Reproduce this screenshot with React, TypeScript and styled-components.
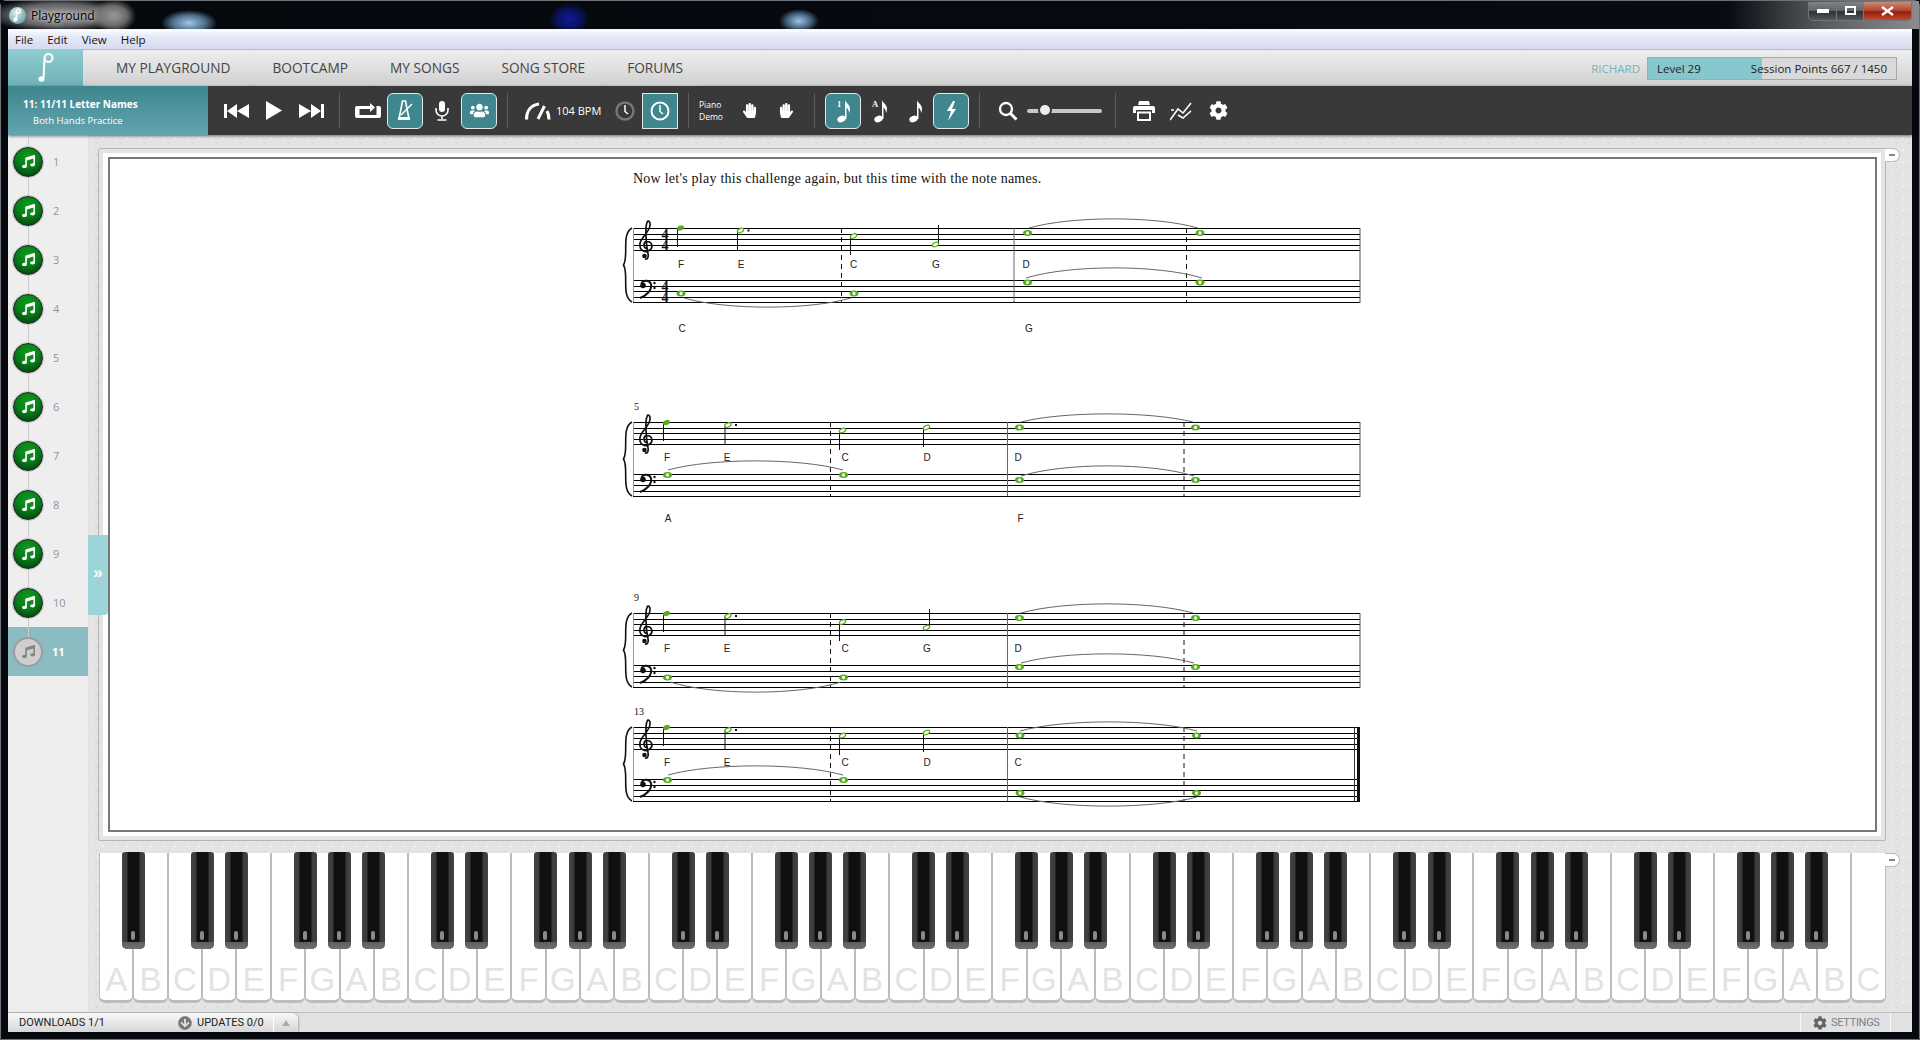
import React from "react";
import styled, { createGlobalStyle } from "styled-components";
import { FaMusic, FaHandPaper, FaUsers, FaCog, FaArrowCircleDown } from "react-icons/fa";

const Global = createGlobalStyle`
  html, body { margin: 0; padding: 0; background: #05080d; }
  * { box-sizing: border-box; }
  #root { width: 1920px; height: 1040px; overflow: hidden; }
`;

const Desktop = styled.div`
  width: 1920px; height: 1040px; display: flex; flex-direction: column;
  background: #05080d; font-family: "Open Sans", "Liberation Sans", sans-serif;
  border: 1px solid #6d7176; border-radius: 6px 6px 0 0;
  padding: 0 7px 7px 7px;
  box-shadow: inset 0 0 0 1px #0a0d12;
`;
const TitleBar = styled.div`
  height: 28px; margin: 0 -7px; padding: 0 7px 0 8px; display: flex; align-items: center; gap: 5px; flex: none;
  background:
    radial-gradient(ellipse 22px 17px at 113px 15px, #969696 0, #7c7c7ccc 60%, transparent 100%),
    radial-gradient(ellipse 72px 17px at 58px 14px, #9a9a9a 0, #8e8e8eaa 65%, transparent 100%),
    radial-gradient(ellipse 28px 13px at 188px 22px, #9cc5ea 0, #7fb0dd99 60%, transparent 100%),
    radial-gradient(ellipse 20px 16px at 568px 18px, #0f1a9c 0, #0f1a9c88 60%, transparent 100%),
    radial-gradient(ellipse 20px 12px at 798px 20px, #9cc5ea 0, #7fb0dd88 60%, transparent 100%),
    linear-gradient(90deg, #05080d 0, #070b12 90%, #595b5d 95%, #8a8c8e 100%);
`;
const AppIcon = styled.div`
  width: 17px; height: 17px; border-radius: 50%; flex: none; display: flex; align-items: center; justify-content: center;
  background: radial-gradient(circle at 40% 35%, #d8eef0, #6aa9b0 75%, #3e6d73);
`;
const TitleText = styled.span`
  font-size: 12px; color: #000; text-shadow: 0 0 4px #ddd, 0 0 7px #ccc;
`;
const WinControls = styled.div`
  margin-left: auto; margin-top: -8px; height: 19px; display: flex; border: 1px solid #70757a; border-top: none; border-radius: 0 0 5px 5px; overflow: hidden; flex: none;
`;
const WinBtn = styled.div<{ $w: number; $red?: boolean }>`
  width: ${p => p.$w}px; display: flex; align-items: center; justify-content: center;
  border-right: 1px solid #777;
  background: ${p => p.$red
    ? "linear-gradient(#c98a7c 0, #b84a33 45%, #8f1f0e 55%, #c44a2f 100%)"
    : "linear-gradient(#7e8387 0, #5f6468 48%, #2e3236 52%, #54585c 100%)"};
  &:last-child { border-right: none; }
`;

const AppShell = styled.div`
  flex: 1; min-height: 0; display: flex; flex-direction: column; background: #eee;
  border-top: 1px solid #f5f5f5;
`;
const MenuBar = styled.div`
  height: 20px; flex: none; display: flex; align-items: center; gap: 14px; padding-left: 7px; font-size: 11.5px; color: #111;
  background: linear-gradient(#fbfcff 0, #e6e9f6 35%, #d5daee 100%); border-bottom: 1px solid #b5b9d2;
`;
const NavBar = styled.div`
  height: 36px; flex: none; display: flex; align-items: stretch;
  background: linear-gradient(#ededed 0, #e3e3e3 40%, #cfcfcf 100%);
`;
const Logo = styled.div`
  width: 75px; margin-right: 15px; flex: none; display: flex; align-items: center; justify-content: center;
  background: linear-gradient(#8fcdd1, #6fb0b7);
`;
const NavTab = styled.div`
  display: flex; align-items: center; padding: 4px 18px 0; margin-right: 6px; font-size: 13.7px; color: #444;
  border-bottom: 5px solid #d3d3d3; white-space: nowrap;
`;
const UserArea = styled.div`
  margin-left: auto; padding-right: 15px; display: flex; align-items: center; gap: 7px;
`;
const UserName = styled.span`
  font-size: 11.5px; color: #74b3bb;
`;
const LevelBar = styled.div`
  width: 250px; height: 23px; border: 1px solid #a8a8a8; display: flex; align-items: center; justify-content: space-between;
  padding: 0 9px; font-size: 11.5px; color: #222;
  background: linear-gradient(90deg, #88c6cd 0, #88c6cd 46%, #d9d9d9 46%, #d9d9d9 100%);
`;

const Toolbar = styled.div`
  height: 49px; flex: none; display: flex; align-items: center; background: #393939; position: relative; z-index: 2;
  box-shadow: 0 1px 3px rgba(0,0,0,.55);
`;
const InfoPanel = styled.div`
  width: 200px; height: 100%; flex: none; padding: 11px 0 0 15px; color: #fff;
  background: linear-gradient(#3f858e, #62a5ae);
`;
const InfoTitle = styled.div`
  font-size: 10px; font-weight: 700; line-height: 15px; white-space: nowrap;
`;
const InfoSub = styled.div`
  font-size: 9.5px; line-height: 14px; margin: 2px 0 0 10px; white-space: nowrap;
`;
const Group = styled.div<{ $first?: boolean }>`
  display: flex; align-items: center; gap: 1px; margin-left: ${p => p.$first ? 11 : 0}px;
`;
const Sep = styled.div`
  width: 1px; height: 35px; background: #5c5c5c; margin: 0 10px; flex: none;
`;
const Slot = styled.div<{ $w?: number; $on?: boolean; $square?: boolean; $shift?: number }>`
  width: ${p => p.$w ?? 36}px; height: 36px; flex: none; display: flex; align-items: center; justify-content: center; color: #fff;
  padding-left: ${p => p.$shift ?? 0}px;
  ${p => p.$on ? `background: #3f868f; border: 1px solid #dfeaeb; border-radius: ${p.$square ? 0 : 6}px;` : ""}
`;
const BpmText = styled.div`
  width: 47px; font-size: 11px; color: #fff; white-space: nowrap; margin-left: -1px; margin-right: 1px;
`;
const DemoText = styled.div`
  width: 31px; font-size: 8.5px; line-height: 11.5px; color: #fff;
`;
const SliderTrack = styled.div`
  width: 75px; height: 4px; border-radius: 2px; background: #c8c8c8; position: relative; flex: none; margin-right: 3px;
  &::after { content: ""; position: absolute; left: 13px; top: -3.5px; width: 10px; height: 10px; border-radius: 50%; background: #eee; box-shadow: 0 0 0 2px #393939; }
`;

const Body = styled.div`
  flex: 1; min-height: 0; display: flex;
`;
const Sidebar = styled.div`
  width: 80px; flex: none; padding-top: 2px; background: #eee;
`;
const LessonRow = styled.div<{ $on?: boolean; $last?: boolean }>`
  height: 49px; display: flex; align-items: center; gap: 10px; padding-left: 5px; position: relative;
  background: ${p => p.$on ? "#8bbcc2" : "transparent"};
  &::before { content: ""; position: absolute; left: 19.5px; top: 0; width: 1px; height: ${p => p.$last ? "50%" : "100%"}; background: #cbcbcb; }
`;
const NoteBadge = styled.div<{ $on?: boolean }>`
  width: 30px; height: 30px; border-radius: 50%; flex: none; position: relative; display: flex; align-items: center; justify-content: center;
  color: ${p => p.$on ? "#858585" : "#fff"}; font-size: 13px;
  ${p => p.$on
    ? "background: #cfcfcf; border: 2px solid #9c9c9c;"
    : "background: radial-gradient(circle at 50% 30%, #0f9a1d 0, #07801a 45%, #023f0c 90%); border: 1px solid #222; box-shadow: 0 0 0 1px #c9c9c9;"}
`;
const LessonNum = styled.span<{ $on?: boolean }>`
  font-size: 11px; color: ${p => p.$on ? "#fff" : "#8c93a3"}; font-weight: ${p => p.$on ? 700 : 400}; margin-left: ${p => p.$on ? -1 : 0}px;
`;
const Workspace = styled.div`
  flex: 1; min-width: 0; display: flex; flex-direction: column; position: relative; padding: 13px 26px 9px 10px;
  background-color: #e4e4e4;
  background-image:
    radial-gradient(circle at 3px 3px, #efefef 1px, transparent 1.6px),
    radial-gradient(circle at 9px 8px, #dadada 1px, transparent 1.6px);
  background-size: 12px 12px;
`;
const ExpandTab = styled.div`
  position: absolute; left: 0; top: 400px; width: 20px; height: 80px; background: #9dd4d8; border-radius: 0 0 4px 0;
  display: flex; align-items: center; justify-content: center; color: #fff; font: 700 17px "Liberation Sans", sans-serif; padding-bottom: 4px;
`;
const CollapseBtn = styled.div<{ $top: number }>`
  position: absolute; z-index: 3; left: 1797px; top: ${p => p.$top}px; width: 15px; height: 14px; background: #fff; border: 1px solid #bbb; border-left: none; border-radius: 0 7px 7px 0;
  display: flex; align-items: center; justify-content: center;
  &::after { content: ""; width: 6px; height: 2px; background: #888; }
`;
const SheetFrame = styled.div`
  width: 1788px; height: 693px; flex: none; padding: 8px 8px 8px 9px; background: #fff; border: 1px solid #b5b5b5; border-radius: 2px;
  box-shadow: inset 0 0 0 4px #e4e4e4; display: flex;
`;
const Sheet = styled.div`
  flex: 1; border: 2px solid #777; background: #fff; padding: 12px 0 0 523px; overflow: hidden;
`;
const Intro = styled.p`
  margin: 0 0 3px; font: 14px/16px "Liberation Serif", serif; letter-spacing: .24px; color: #111; white-space: nowrap;
`;
const ScoreSvg = styled.svg`
  display: block; margin-left: -13px;
`;
const Keyboard = styled.div`
  width: 1787px; height: 150px; margin: 12px 0 0 1px; display: flex; flex: none;
`;
const WhiteKey = styled.div`
  flex: 1; position: relative; background: #fff; border: solid #bcbcbc; border-width: 0 1px 3px 1px; border-radius: 0 0 6px 6px;
  display: flex; align-items: flex-end; justify-content: center;
`;
const KeyLabel = styled.span`
  font: 33px/33px "Liberation Sans", sans-serif; color: #e3e3e3; margin-bottom: 4px;
`;
const BlackKey = styled.div`
  position: absolute; z-index: 2; top: -1px; right: -12.5px; width: 23px; height: 97px; border-radius: 3px 3px 5px 5px; overflow: hidden;
  background: linear-gradient(90deg, #444 0, #3a3a3a 22%, #0f0f0f 26%, #111 74%, #3a3a3a 78%, #444 100%);
  &::before { content: ""; position: absolute; left: 9px; bottom: 9px; width: 4px; height: 9px; border-radius: 2px; background: #8a8a8a; }
  &::after { content: ""; position: absolute; left: 0; right: 0; bottom: 0; height: 7px; background: linear-gradient(#5e5e5e, #707070); }
`;
const StatusBar = styled.div`
  height: 20px; flex: none; display: flex; align-items: stretch; background: #e2e2e2; border-top: 1px solid #bdbdbd;
  font: 11px "Roboto", sans-serif; color: #222;
`;
const StatusTab = styled.div`
  width: 290px; display: flex; align-items: center; padding-left: 11px; border-radius: 0 6px 0 0; flex: none;
  background: linear-gradient(#f8f8f8, #d6d6d6); box-shadow: 1px 0 2px rgba(0,0,0,.25);
`;
const Downloads = styled.span`
  width: 159px; white-space: nowrap;
`;
const UpdateIcon = styled.span`
  color: #777; font-size: 14px; display: flex; margin-right: 5px;
`;
const UpdateTab = styled.span`
  width: 76px; white-space: nowrap;
`;
const TabDivider = styled.span`
  width: 1px; height: 18px; background: #fff; margin-right: 8px;
`;
const UpArrow = styled.span`
  width: 0; height: 0; border: 4px solid transparent; border-bottom: 6px solid #aaa; border-top: none;
`;
const SettingsCell = styled.div`
  margin-left: auto; margin-right: 21px; width: 91px; border-left: 1px solid #f7f7f7; border-right: 1px solid #f7f7f7; display: flex; align-items: center; gap: 4px; padding-left: 12px; color: #77808f; letter-spacing: -.3px;
`;

const W = "#fff";
const I = (p: React.SVGProps<SVGSVGElement>) => <svg fill={W} {...p} />;

const Prev = () => <I width="26" height="14" viewBox="0 0 26 14"><rect x="0" y="0" width="3" height="14"/><path d="M3 7 13 0v14zM13 7 25 0v14z"/></I>;
const Next = () => <I width="26" height="14" viewBox="0 0 26 14"><rect x="23" y="0" width="3" height="14"/><path d="M23 7 13 0v14zM13 7 1 0v14z"/></I>;
const Play = () => <I width="16" height="19" viewBox="0 0 16 19"><path d="M0 0 16 9.5 0 19z"/></I>;
const Loop = () => <I width="26" height="15" viewBox="0 0 26 15"><path d="M2 3h13v-3l5 4.5-5 4.5V6H4.500v6h17V3H24a2 2 0 0 1 2 2v8a2 2 0 0 1-2 2H2a2 2 0 0 1-2-2V5a2 2 0 0 1 2-2z"/></I>;
const Metronome = () => <svg width="16" height="21" viewBox="0 0 16 21" fill="none" stroke={W}><path d="M5.500 1h3l3.500 18H2z" strokeWidth="1.6"/><path d="M4 15 15 4" strokeWidth="1.5"/><rect x="1" y="17" width="12" height="3" fill={W} stroke="none"/></svg>;
const Mic = () => <svg width="14" height="20" viewBox="0 0 14 20" fill="none" stroke={W} strokeWidth="1.600"><rect x="4" y="0" width="6" height="11" rx="3" fill={W} stroke="none"/><path d="M1 7v2a6 6 0 0 0 12 0V7M7 15v3M2.500 19h9"/></svg>;
const Gauge = () => <svg width="27" height="18" viewBox="0 0 27 18" fill="none" stroke={W}><path d="M2.500 17.500C2.500 9 7 3 15 2" strokeWidth="3.200"/><path d="M25 17.500c0-3-.5-6-2-8.500" strokeWidth="3.200"/><path d="M14 17 20.500 4" strokeWidth="3"/></svg>;
const Clock = ({ c = W, w = 2 }: { c?: string; w?: number }) => <svg width="20" height="20" viewBox="0 0 20 20" fill="none"><circle cx="10" cy="10" r="8.500" stroke={c} strokeWidth={w}/><path d="M10 4v6.500l3 2.500" stroke={W} strokeWidth="1.500"/></svg>;
const QNote = ({ mark, mx = 7 }: { mark?: string; mx?: number }) => (
  <svg width="26" height="24" viewBox="0 0 26 24">
    {mark && <text x={mx} y="8" fontSize="8.5" fontWeight={700} fontFamily="Liberation Serif, serif" fill={W}>{mark}</text>}
    <ellipse cx="11.500" cy="20" rx="4.300" ry="3.200" fill={W} transform="rotate(-20 11.500 20)"/>
    <path d="M15 20V1c.5 3 5 4 5 9 0 2-.5 3-1 4 0-3-1.500-4.500-2.500-5.500V20z" fill={W}/>
  </svg>
);
const Bolt = () => <I width="11" height="20" viewBox="0 0 11 20"><path d="M7 0 1 10h4l-3 10 8-12H6l3-8z"/></I>;
const Search = () => <svg width="20" height="20" viewBox="0 0 20 20" fill="none" stroke={W}><circle cx="8" cy="8" r="6" strokeWidth="2.300"/><path d="m12.500 12.500 6 6" strokeWidth="3"/></svg>;
const Printer = () => <I width="22" height="20" viewBox="0 0 22 20"><path d="M6 0h10l1 4H5zM2 5h18a2 2 0 0 1 2 2v5h-3V9H3v3H0V7a2 2 0 0 1 2-2zM4 10.500h14V20H4zm2 2V18h10v-5.500z"/></I>;
const Chart = () => <svg width="22" height="20" viewBox="0 0 22 20" fill="none" stroke={W} strokeWidth="1.600"><path d="M0 19 8 8l5 4 8-10"/><path d="M1 9h3M8 14l5 3 8-7"/></svg>;

const Score = () => {
  const green = "#55ac1d";
  const Whole = ({ x, y }: { x: number; y: number }) => (<g><ellipse cx={x} cy={y} rx="4.500" ry="3" fill={green}/><ellipse cx={x} cy={y} rx="1.500" ry="1.800" fill="#fff"/></g>);
  const Half = ({ x, y, stem, up, dot }: { x: number; y: number; stem?: number; up?: boolean; dot?: boolean }) => (
    <g>
      <line x1={up ? x + 3 : x - 3} x2={up ? x + 3 : x - 3} y1={y} y2={stem} stroke="#111" strokeWidth="1"/>
      <ellipse cx={x} cy={y} rx="3.300" ry="2" fill="#fff" stroke={green} strokeWidth="1.200" transform={`rotate(-25 ${x} ${y})`}/>
      {dot && <rect x={x + 7} y={y - 1} width="2" height="2" fill="#111"/>}
    </g>
  );
  const Filled = ({ x, y, stem }: { x: number; y: number; stem: number }) => (
    <g>
      <line x1={x - 3} x2={x - 3} y1={y} y2={stem} stroke="#111" strokeWidth="1"/>
      <ellipse cx={x} cy={y} rx="3.600" ry="2.500" fill={green} transform={`rotate(-20 ${x} ${y})`}/>
    </g>
  );
  const Tie = ({ a, b, y, peak }: { a: number; b: number; y: number; peak: number }) => (
    <path d={`M${a} ${y}C${a + (b - a) * .25} ${2 * peak - y - (peak - y) * .65} ${a + (b - a) * .75} ${2 * peak - y - (peak - y) * .65} ${b} ${y}`} fill="none" stroke="#666" strokeWidth="1"/>
  );
  const Label = ({ x, y, t }: { x: number; y: number; t: string }) => (
    <text x={x} y={y} fontSize="10" textAnchor="middle" fontFamily="Liberation Sans, sans-serif" fill="#222">{t}</text>
  );
  const Staff = ({ t, b, bars, time, final }: { t: number; b: number; bars: [number, number, number]; time?: boolean; final?: boolean }) => {
    const tl = [0, 6, 11, 17, 22].map(d => t + d);
    const bl = [0, 6, 11, 17, 22].map(d => b + d);
    const tx = t + 16.5;
    return (
      <g>
        {[...tl, ...bl].map(y => <line key={y} x1="633" x2="1360" y1={y + .5} y2={y + .5} stroke="#000" strokeWidth="1"/>)}
        <line x1="633.500" x2="633.500" y1={t} y2={b + 22} stroke="#999" strokeWidth="1"/>
        <line x1={bars[0]} x2={bars[0]} y1={t} y2={b + 22} stroke="#111" strokeWidth="1" strokeDasharray="5 4"/>
        <line x1={bars[1]} x2={bars[1]} y1={t} y2={b + 22} stroke="#666" strokeWidth="1"/>
        <line x1={bars[2]} x2={bars[2]} y1={t} y2={b + 22} stroke="#111" strokeWidth="1" strokeDasharray="5 4"/>
        {final
          ? <g><line x1="1354.500" x2="1354.500" y1={t} y2={b + 22} stroke="#333"/><rect x="1357" y={t} width="3" height={b + 22 - t} fill="#111"/></g>
          : <line x1="1360" x2="1360" y1={t} y2={b + 23} stroke="#555"/>}
        <path d={`M632 ${t}C621 ${t + 6} 629 ${(t + b) / 2 + 2} 623.500 ${(t + b + 22) / 2}C629 ${(t + b) / 2 + 20} 621 ${b + 16} 632 ${b + 22}`} fill="none" stroke="#111" strokeWidth="1.600"/>
        <g transform={`translate(646 ${tx})`} fill="none" stroke="#111">
          <path d="M1 4C-3 4-3-3 1-3 6-3 8 3 3 6-2 9-7 5-6-1-5-7 3-12 4-19 4.500-23 2-25 1-22-1-17 0 0 2 9 3 13 1 15-1 14.500" strokeWidth="1.700"/>
          <circle cx="-1.500" cy="11.500" r="2.300" fill="#111" stroke="none"/>
        </g>
        <g transform={`translate(640 ${b})`} fill="none" stroke="#111">
          <circle cx="3" cy="5.500" r="2.800" fill="#111" stroke="none"/>
          <path d="M1.500 4C2 .5 9-1 11 4 12.500 10 6 16 0 18" strokeWidth="2"/>
          <circle cx="14.500" cy="3" r="1.200" fill="#111" stroke="none"/>
          <circle cx="14.500" cy="8" r="1.200" fill="#111" stroke="none"/>
        </g>
        {time && ["t", "b"].map(k => {
          const y0 = k === "t" ? t : b;
          return <g key={k} fontFamily="Liberation Serif, serif" fontWeight={700} fontSize="14" fill="#111" textAnchor="middle"><text x="665" y={y0 + 11}>4</text><text x="665" y={y0 + 22}>4</text></g>;
        })}
      </g>
    );
  };
  const Num = ({ x, y, t }: { x: number; y: number; t: string }) => <text x={x} y={y} fontSize="10" fontFamily="Liberation Serif, serif" fill="#111">{t}</text>;
  return (
    <ScoreSvg width="750" height="620" viewBox="620 190 750 620">
      {/* System 1 */}
      <Staff t={228} b={280} bars={[841.500, 1014, 1186.500]} time/>
      <Filled x={680.500} y={228} stem={247}/>
      <Half x={740.500} y={230.500} stem={250} dot/>
      <Half x={853.500} y={236} stem={255}/>
      <Half x={935.500} y={244.500} stem={225} up/>
      <Whole x={1027.500} y={233}/><Whole x={1200} y={233}/>
      <Tie a={1029} b={1198} y={228} peak={219}/>
      <Whole x={681} y={293.500}/><Whole x={854} y={293.500}/>
      <Tie a={684} b={851} y={298} peak={307}/>
      <Whole x={1027.500} y={282.500}/><Whole x={1200} y={282.500}/>
      <Tie a={1026} b={1202} y={278} peak={268}/>
      {[["F", 681], ["E", 741], ["C", 853.500], ["G", 936], ["D", 1026]].map(([t, x]) => <Label key={t as string} x={x as number} y={268} t={t as string}/>)}
      <Label x={682} y={332} t="C"/><Label x={1029} y={332} t="G"/>

      {/* System 2 */}
      <Num x={634} y={410} t="5"/>
      <Staff t={422} b={474} bars={[830.500, 1007.500, 1184]}/>
      <Filled x={666.500} y={422.500} stem={441}/>
      <Half x={728} y={425} stem={444} dot/>
      <Half x={842.500} y={430.500} stem={450}/>
      <Half x={926.500} y={427.500} stem={447}/>
      <Whole x={1019.500} y={427.500}/><Whole x={1195.500} y={427.500}/>
      <Tie a={1021} b={1193} y={422} peak={414}/>
      <Whole x={667.500} y={475}/><Whole x={843.500} y={475}/>
      <Tie a={668} b={843} y={470} peak={461}/>
      <Whole x={1019.500} y={480}/><Whole x={1195.500} y={480}/>
      <Tie a={1021} b={1194} y={476} peak={466}/>
      {[["F", 667], ["E", 727], ["C", 845], ["D", 927], ["D2", 1018]].map(([t, x]) => <Label key={t as string} x={x as number} y={461} t={(t as string)[0]}/>)}
      <Label x={668} y={522} t="A"/><Label x={1020.500} y={522} t="F"/>

      {/* System 3 */}
      <Num x={634} y={601} t="9"/>
      <Staff t={613} b={665} bars={[830.500, 1007.500, 1184]}/>
      <Filled x={666.500} y={613.500} stem={632}/>
      <Half x={728} y={616} stem={635} dot/>
      <Half x={842.500} y={622} stem={641}/>
      <Half x={926.500} y={627.500} stem={609} up/>
      <Whole x={1019.500} y={618}/><Whole x={1195.500} y={618}/>
      <Tie a={1021} b={1193} y={613} peak={604}/>
      <Whole x={667.500} y={677.500}/><Whole x={843.500} y={677.500}/>
      <Tie a={670} b={841} y={682} peak={692}/>
      <Whole x={1019.500} y={667}/><Whole x={1195.500} y={667}/>
      <Tie a={1021} b={1194} y={663} peak={654}/>
      {[["F", 667], ["E", 727], ["C", 845], ["G", 927], ["D", 1018]].map(([t, x]) => <Label key={t as string} x={x as number} y={652} t={t as string}/>)}

      {/* System 4 */}
      <Num x={634} y={715} t="13"/>
      <Staff t={727} b={779} bars={[830.500, 1007.500, 1184]} final/>
      <Filled x={666.500} y={727.500} stem={746}/>
      <Half x={728} y={730} stem={749} dot/>
      <Half x={842.500} y={735.500} stem={755}/>
      <Half x={926.500} y={732.500} stem={752}/>
      <Whole x={1020} y={735.500}/><Whole x={1196.500} y={735.500}/>
      <Tie a={1020} b={1197} y={731} peak={722}/>
      <Whole x={667.500} y={780}/><Whole x={843.500} y={780}/>
      <Tie a={668} b={843} y={775} peak={766}/>
      <Whole x={1020} y={793}/><Whole x={1196.500} y={793}/>
      <Tie a={1020} b={1197} y={797} peak={806}/>
      {[["F", 667], ["E", 727], ["C", 845], ["D", 927], ["C2", 1018]].map(([t, x]) => <Label key={t as string} x={x as number} y={766} t={(t as string)[0]}/>)}
    </ScoreSvg>
  );
};

const lessons = Array.from({ length: 11 }, (_, i) => i + 1);
const keys = ("AB" + "CDEFGAB".repeat(7) + "C").split("");
const noSharp = (k: string, i: number) => k === "B" || k === "E" || i === keys.length - 1;

export default function App() {
  return (
    <>
      <Global />
      <Desktop>
        <TitleBar>
          <AppIcon>
            <svg width="9" height="14" viewBox="0 0 9 14" fill="none" stroke="#fff" strokeWidth="1.300"><circle cx="5.500" cy="3" r="2"/><path d="M3.500 3.500V11"/><circle cx="2.500" cy="11.500" r="1.500" fill="#fff"/></svg>
          </AppIcon>
          <TitleText>Playground</TitleText>
          <WinControls>
            <WinBtn $w={28}><svg width="12" height="4"><rect width="12" height="4" fill="#fff"/></svg></WinBtn>
            <WinBtn $w={27}><svg width="11" height="9" fill="none"><rect x="1" y="1" width="9" height="7" stroke="#fff" strokeWidth="2"/></svg></WinBtn>
            <WinBtn $w={47} $red><svg width="13" height="10" viewBox="0 0 13 10"><path d="M1 1l11 8M12 1 1 9" stroke="#fff" strokeWidth="2.400"/></svg></WinBtn>
          </WinControls>
        </TitleBar>
        <AppShell>
          <MenuBar><span>File</span><span>Edit</span><span>View</span><span>Help</span></MenuBar>
          <NavBar>
            <Logo>
              <svg width="16" height="30" viewBox="0 0 16 30" fill="none" stroke="#fff" strokeWidth="2"><circle cx="10.500" cy="5" r="4"/><path d="M6.500 5 5.500 25"/><ellipse cx="3.500" cy="26" rx="3" ry="2.800" fill="#fff" stroke="none"/></svg>
            </Logo>
            <NavTab>MY PLAYGROUND</NavTab>
            <NavTab>BOOTCAMP</NavTab>
            <NavTab>MY SONGS</NavTab>
            <NavTab>SONG STORE</NavTab>
            <NavTab>FORUMS</NavTab>
            <UserArea>
              <UserName>RICHARD</UserName>
              <LevelBar><span>Level 29</span><span>Session Points 667 / 1450</span></LevelBar>
            </UserArea>
          </NavBar>
          <Toolbar>
            <InfoPanel>
              <InfoTitle>11: 11/11 Letter Names</InfoTitle>
              <InfoSub>Both Hands Practice</InfoSub>
            </InfoPanel>
            <Group $first>
              <Slot><Prev /></Slot><Slot><Play /></Slot><Slot><Next /></Slot>
            </Group>
            <Sep />
            <Group>
              <Slot><Loop /></Slot>
              <Slot $on><Metronome /></Slot>
              <Slot><Mic /></Slot>
              <Slot $on><FaUsers size={19} /></Slot>
            </Group>
            <Sep />
            <Group>
              <Slot $w={38}><Gauge /></Slot>
              <BpmText>104 BPM</BpmText>
              <Slot $shift={4}><Clock c="#777" w={2.5} /></Slot>
              <Slot $on $square><Clock /></Slot>
            </Group>
            <Sep />
            <Group>
              <DemoText>Piano<br />Demo</DemoText>
              <Slot><FaHandPaper size={15} /></Slot>
              <Slot><FaHandPaper size={15} style={{ transform: "scaleX(-1)" }} /></Slot>
            </Group>
            <Sep />
            <Group>
              <Slot $on><QNote mark="1" /></Slot>
              <Slot $w={35}><QNote mark="A" mx={5} /></Slot>
              <Slot $w={34}><QNote /></Slot>
              <Slot $on><Bolt /></Slot>
            </Group>
            <Sep />
            <Group>
              <Slot><Search /></Slot>
              <SliderTrack />
            </Group>
            <Sep />
            <Group>
              <Slot><Printer /></Slot>
              <Slot><Chart /></Slot>
              <Slot><FaCog size={19} /></Slot>
            </Group>
          </Toolbar>
          <Body>
            <Sidebar>
              {lessons.map(n => (
                <LessonRow key={n} $on={n === 11} $last={n === 11}>
                  <NoteBadge $on={n === 11}><FaMusic /></NoteBadge>
                  <LessonNum $on={n === 11}>{n}</LessonNum>
                </LessonRow>
              ))}
            </Sidebar>
            <Workspace>
              <ExpandTab>»</ExpandTab>
              <CollapseBtn $top={13} />
              <CollapseBtn $top={718} />
              <SheetFrame>
                <Sheet>
                  <Intro>Now let's play this challenge again, but this time with the note names.</Intro>
                  <Score />
                </Sheet>
              </SheetFrame>
              <Keyboard>
                {keys.map((k, i) => (
                  <WhiteKey key={i}>
                    {!noSharp(k, i) && <BlackKey />}
                    <KeyLabel>{k}</KeyLabel>
                  </WhiteKey>
                ))}
              </Keyboard>
            </Workspace>
          </Body>
          <StatusBar>
            <StatusTab>
              <Downloads>DOWNLOADS 1/1</Downloads>
              <UpdateIcon><FaArrowCircleDown /></UpdateIcon>
              <UpdateTab>UPDATES 0/0</UpdateTab>
              <TabDivider />
              <UpArrow />
            </StatusTab>
            <SettingsCell><FaCog size={14} color="#666" />SETTINGS</SettingsCell>
          </StatusBar>
        </AppShell>
      </Desktop>
    </>
  );
}
